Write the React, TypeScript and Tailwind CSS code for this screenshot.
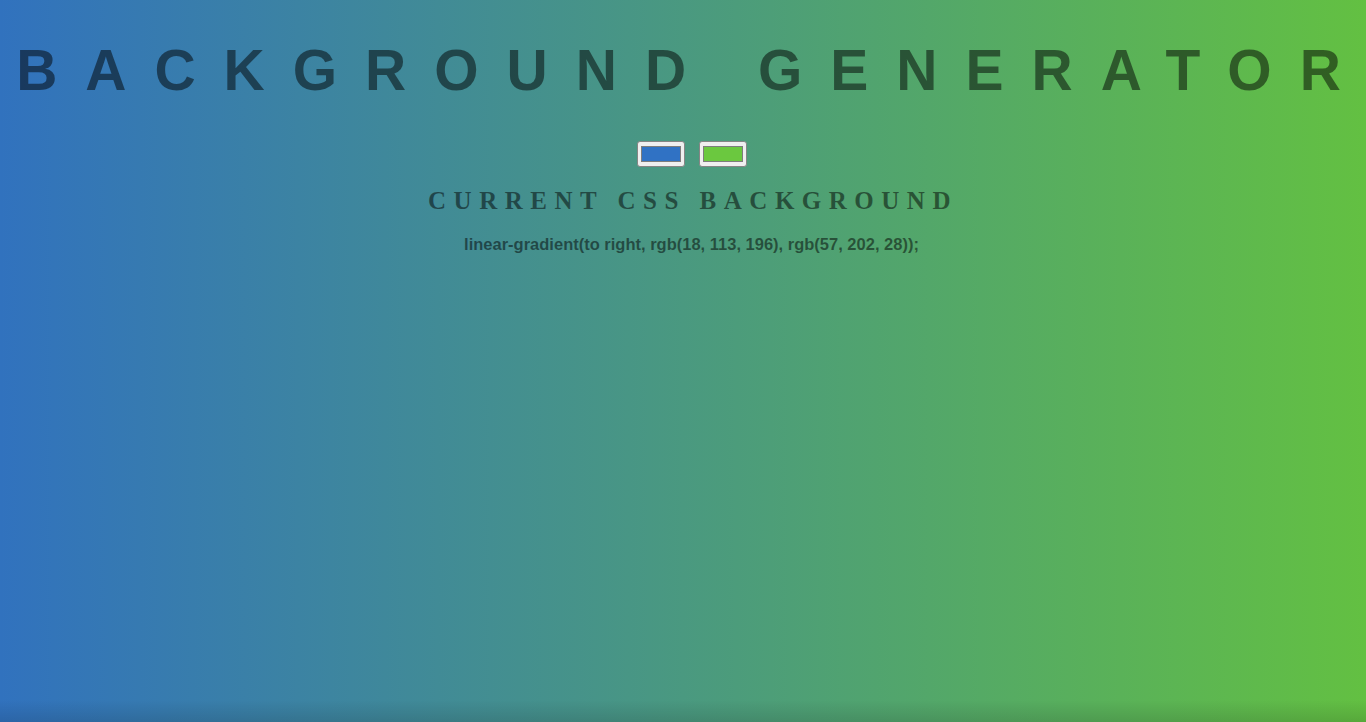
import React from 'react';

const ColorBox: React.FC<{ color: string }> = ({ color }) => (
    <div className="w-[48px] h-[26px] rounded-[3px] border border-[#858585] bg-[#efefef] flex items-center justify-center">
        <div className="w-[40px] h-[16px] border border-[#7d7d7d]" style={{ backgroundColor: color }} />
    </div>
);

const App: React.FC = () => {
    return (
        <div className="min-h-[722px] w-full flex flex-col items-center bg-[linear-gradient(to_top,rgba(0,0,0,0.12),rgba(0,0,0,0)_22px),linear-gradient(to_right,#3172be,#63c042)]">
            {/* Title */}
            <h1 className="mt-[42px] pr-[9px] text-[57px] leading-none font-bold tracking-[28px] text-black/50 whitespace-nowrap font-['Liberation_Sans',Arial,sans-serif]">
                BACKGROUND GENERATO<span className="tracking-normal">R</span>
            </h1>

            {/* Color pickers */}
            <div className="mt-[42px] ml-[17px] flex gap-[14px]">
                <ColorBox color="#3072c4" />
                <ColorBox color="#6bc83f" />
            </div>

            <h3 className="mt-[21px] ml-[20px] text-[25px] leading-none font-bold tracking-[7.5px] text-black/50 whitespace-nowrap font-['Liberation_Serif','Times_New_Roman',serif]">
                CURRENT CSS BACKGROUND
            </h3>

            <p className="mt-[23px] ml-[17px] text-[16.5px] leading-none font-bold text-black/50 font-['Liberation_Sans',Arial,sans-serif]">
                linear-gradient(to right, rgb(18, 113, 196), rgb(57, 202, 28));
            </p>
        </div>
    );
};

export default App;
